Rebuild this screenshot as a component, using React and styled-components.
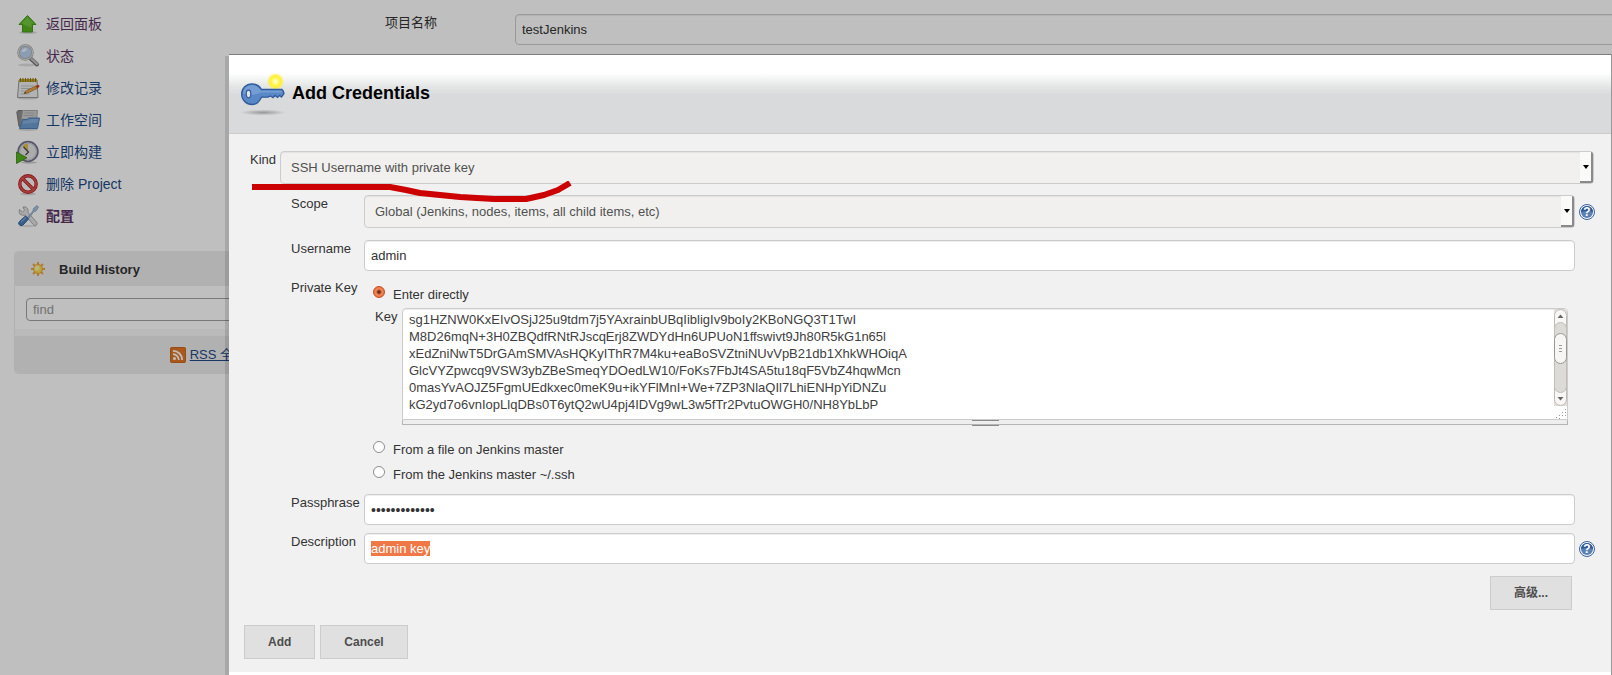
import React, { useEffect, useRef } from 'react'
import styled, { createGlobalStyle, css } from 'styled-components'

const GlobalStyle = createGlobalStyle`
  * { box-sizing: border-box; }
  body {
    margin: 0;
    background: #fff;
    color: #333;
    font: 13px/17px "Liberation Sans", "Noto Sans CJK SC", Arial, sans-serif;
  }
  input, select, textarea, button { font: inherit; color: inherit; margin: 0; }
`

/* ---------- page ---------- */

const Page = styled.div`
  display: flex;
  min-height: 100vh;
  overflow: hidden;
`

const Sidebar = styled.aside`
  flex: 0 0 385px;
  padding: 12px 121px 0 14px;
`

const TaskList = styled.nav`
  display: flex;
  flex-direction: column;
  gap: 8px;
  padding-left: 2px;
  margin-bottom: 23px;
`

const TaskLink = styled.a`
  display: flex;
  align-items: center;
  gap: 6px;
  height: 24px;
  font-size: 14px;
  text-decoration: none;
  color: ${p => (p.$visited ? '#5c3566' : '#204a87')};
  font-weight: ${p => (p.$current ? 'bold' : 'normal')};
`

const HistoryPanel = styled.section`
  border: 1px solid #ededed;
  border-radius: 4px;
  overflow: hidden;
`

const HistoryHeader = styled.h2`
  display: flex;
  align-items: center;
  gap: 13px;
  height: 34px;
  margin: 0;
  padding-left: 15px;
  background: #ededed;
  font-size: 13px;
`

const HistorySearch = styled.div`
  padding: 12px 11px 0;
  height: 43px;
`

const FindInput = styled.input`
  display: block;
  width: 100%;
  height: 23px;
  padding: 0 6px;
  border: 1px solid #a0a0a0;
  border-radius: 4px;
  background: #fff;
  &::placeholder { color: #999; opacity: 1; }
`

const HistoryStrip = styled.div`
  height: 7px;
  background: #f9f9f9;
`

const HistoryFooter = styled.div`
  display: flex;
  align-items: center;
  justify-content: flex-end;
  gap: 4px;
  height: 37px;
  padding-right: 17px;
  background: #ededed;
  a { color: #204a87; }
`

/* runs on past the right edge of the window */
const Main = styled.main`
  flex: 1;
  display: grid;
  grid-template-columns: 130px 1fr;
  align-items: start;
  padding-top: 14px;
  margin-right: -8px;
`

const Label = styled.label`
  white-space: nowrap;
  line-height: 17px;
`

const TextInput = styled.input`
  display: block;
  width: 100%;
  height: 31px;
  padding: 0 6px;
  border: 1px solid #ccc;
  border-radius: 4px;
  outline: none;
  background: #fff;
  box-shadow: inset 0 1px 1px rgba(0, 0, 0, 0.07);
  ${p => p.type === 'password' && css`font-size: 14px;`}
  &::selection { background: #f07746; color: #fff; }
`

const Mask = styled.div`
  position: fixed;
  inset: 0;
  background: rgba(0, 0, 0, 0.25);
`

/* ---------- dialog ---------- */

const Dialog = styled.div`
  position: fixed;
  inset: 54px 0 0 229px;
  border-top: 1px solid #7d7d7d;
  border-right: 1px solid #999;
  background: #fff;
  box-shadow: -4px 2px 0 rgba(0, 0, 0, 0.12);
`

const DialogHeader = styled.header`
  display: flex;
  align-items: center;
  gap: 3px;
  height: 79px;
  padding-left: 12px;
  border-bottom: 1px solid #ccc;
  background: linear-gradient(#fff 18px, #e3e5e5 32px, #d9dadc 40px);
  h1 {
    margin: 0;
    padding-bottom: 2px;
    color: #000;
    font-size: 18px;
    line-height: 22px;
  }
`

const Form = styled.form`
  padding: 17px 0 13px;
  background: #f1f1f1;
`

const KindRow = styled.div`
  position: relative;
  display: grid;
  grid-template-columns: 30px 1fr;
  padding: 0 17px 11px 21px;
`

const Underline = styled.svg`
  position: absolute;
  z-index: 2;
  left: 20px;
  top: 30px;
  pointer-events: none;
`

const Fields = styled.div`
  display: flex;
  flex-direction: column;
  gap: 8px;
  padding-left: 62px;
`

const FieldRow = styled.div`
  display: grid;
  grid-template-columns: 73px 1fr 36px;
  align-items: start;
  margin-bottom: ${p => (p.$spaced ? '4px' : '0')};
`

const Help = styled.a`
  align-self: center;
  display: flex;
  padding-left: 4px;
`

const SelectBox = styled.div`
  position: relative;
  height: 33px;
`

const Select = styled.select`
  appearance: none;
  width: 100%;
  height: 33px;
  padding: 0 10px;
  border: 1px solid #ccc;
  border-radius: 4px;
  background: #f1f0ee;
  color: #505050;
  box-shadow: inset 0 1px 1px rgba(0, 0, 0, 0.06);
`

const SelectArrow = styled.span`
  position: absolute;
  top: 1px;
  right: 1px;
  bottom: 1px;
  width: 13px;
  display: flex;
  align-items: center;
  justify-content: center;
  border: solid #8a8a8a;
  border-width: 0 2px 2px 0;
  border-radius: 0 2px 2px 0;
  background: #fafaf9;
  pointer-events: none;
  &::after {
    content: '';
    border: 3px solid transparent;
    border-top: 4px solid #000;
    border-bottom: 0;
  }
`

const KeySource = styled.div`
  padding: 7px 7px 3px 9px;
`

const RadioLabel = styled.label`
  display: flex;
  align-items: flex-start;
  gap: 8px;
  margin-bottom: ${p => p.$gap || 0}px;
`

const Radio = styled.input`
  appearance: none;
  flex: none;
  width: 12px;
  height: 12px;
  border: 1px solid #8f8d89;
  border-radius: 50%;
  background: #fff;
  &:checked {
    border-color: #c14d22;
    background: radial-gradient(circle, #6b2c14 0 1px, #f4865a 3px, #ee7442 5px);
  }
`

const KeyRow = styled.div`
  display: grid;
  grid-template-columns: 27px 1fr;
  padding-left: 2px;
  margin-bottom: 16px;
`

const KeyBox = styled.div`
  display: flex;
  height: 112px;
  border: 1px solid #ccc;
  border-radius: 4px 4px 0 0;
  background: #fff;
  box-shadow: inset 0 1px 1px rgba(0, 0, 0, 0.08);
`

const KeyText = styled.textarea`
  flex: 1;
  padding: 2px 6px;
  border: 0;
  outline: none;
  resize: none;
  overflow: hidden;
  background: transparent;
  color: #404040;
  line-height: 17px;
  white-space: pre;
`

const ScrollColumn = styled.div`
  display: flex;
  flex-direction: column;
  justify-content: space-between;
  align-items: flex-end;
`

const ResizeBar = styled.div`
  display: flex;
  justify-content: center;
  height: 5px;
  border: 1px solid #b5b5b5;
  border-top: 0;
  background: #eee;
  &::after {
    content: '';
    width: 27px;
    height: 4px;
    border: solid #8a8a8a;
    border-width: 1px 0;
  }
`

const Button = styled.button`
  height: 34px;
  padding: 0 23px;
  border: 1px solid #ccc;
  background: #e0e0e0;
  color: #4d4d4d;
  font-size: 12px;
  font-weight: bold;
`

const AdvancedRow = styled.div`
  display: flex;
  justify-content: flex-end;
  padding: 4px 39px 15px 0;
`

const Actions = styled.div`
  display: flex;
  gap: 5px;
  padding-left: 15px;
`

/* ---------- icons ---------- */

const Icon = ({ children, size = 24 }) => (
  <svg width={size} height={size} viewBox={`0 0 ${size} ${size}`} aria-hidden="true">
    {children}
  </svg>
)

const UpIcon = () => (
  <Icon>
    <ellipse cx="12" cy="20.5" rx="9" ry="1.5" fill="#000" opacity=".15" />
    <path d="M11.5 3.5 20 12.5h-3.5v7.5h-10v-7.5H3z" fill="#55b31c" stroke="#459a1c" />
    <path d="M11.5 5 18 11.6h-2.500v4L7.500 12.500v-1H5z" fill="#8fdc5c" opacity=".5" />
  </Icon>
)

const SearchIcon = () => (
  <Icon>
    <ellipse cx="11" cy="21" rx="9" ry="1.500" fill="#000" opacity=".12" />
    <path d="m14.500 14.500 6.500 6" stroke="#777" strokeWidth="4" strokeLinecap="round" />
    <path d="m15.500 15 5.500 5" stroke="#c9c9c9" strokeWidth="2" strokeLinecap="round" />
    <circle cx="9.500" cy="8.500" r="7" fill="#b9d3ef" stroke="#a5a5a5" strokeWidth="2.500" />
    <circle cx="9.500" cy="8.500" r="7" fill="none" stroke="#ececec" />
    <path d="M5.500 8Q7 3.500 11 4.500 10.500 8 5.500 8z" fill="#fff" opacity=".75" />
  </Icon>
)

const NotepadIcon = () => (
  <Icon>
    <ellipse cx="12" cy="22.500" rx="10" ry="1" fill="#000" opacity=".15" />
    <path d="M3 4h18l1 17.500H1.500z" fill="#eee" stroke="#979797" />
    <path d="M3 3h18v3H3z" fill="#c9a820" />
    <path d="M4.500 2v4m2.500-4v4m2.500-4v4m2.500-4v4m2.500-4v4m2.500-4v4m2.500-4v4" stroke="#86742a" />
    <path d="M5 10h13M5 12.500h9M5 15h5M4.500 18h9" stroke="#c2c2c2" />
    <path d="m8 17.500 2.500-3L20 10l1.300 2.300-9.300 4.500z" fill="#f0a94a" stroke="#9a6a1c" strokeWidth=".7" />
    <path d="m19.500 10 2.500-1.300q2 .3 1.300 2.200l-2 1.400z" fill="#d8391f" />
    <path d="m8 17.500 1.300-1.500.7 1z" fill="#222" />
  </Icon>
)

const FolderIcon = () => (
  <Icon>
    <ellipse cx="12" cy="21.500" rx="10" ry="1.500" fill="#000" opacity=".15" />
    <path d="M.8 4 2 2.500h4l1 2h5v14H3z" fill="#8f8f8f" stroke="#777" />
    <path d="M4.500 18 6.500 2.500h15L20.500 13z" fill="#cdcdcd" stroke="#999" strokeWidth=".8" />
    <path d="M8.500 5h10M8 7.500h10" stroke="#b5b5b5" />
    <path d="M3.500 20.500 6.500 11.500H11l2-1.500h10.500l-2 10.500z" fill="#6d9dd1" stroke="#4f7fb8" />
    <path d="M7.500 12.500h4l2-1.500h9l-.8 3.500-15.200 1.500z" fill="#a1c2e6" opacity=".5" />
  </Icon>
)

const ClockIcon = () => (
  <Icon>
    <ellipse cx="13" cy="22.500" rx="8" ry="1.200" fill="#000" opacity=".2" />
    <circle cx="12" cy="11.500" r="9.800" fill="#e6e6e6" stroke="#73738c" strokeWidth="1.800" />
    <circle cx="12" cy="11.500" r="8.300" fill="none" stroke="#c9c9d8" strokeWidth="1.200" />
    <path d="M12 11.500 6.500 6q2-2.500 5.500-2.500z" fill="#dcc04d" />
    <path d="m7.500 7 5 5-3 3" fill="none" stroke="#444" strokeWidth="1.200" />
    <path d="M.5 12 11 17.800.5 23.500z" fill="#53b51d" stroke="#35800d" strokeWidth=".8" />
  </Icon>
)

const DeleteIcon = () => (
  <Icon>
    <ellipse cx="12" cy="22" rx="8" ry="1.300" fill="#000" opacity=".15" />
    <circle cx="12" cy="12" r="8.200" fill="#f2f2f2" fillOpacity=".5" stroke="#b82020" strokeWidth="3.400" />
    <path d="m6.500 6.500 11 11" stroke="#b82020" strokeWidth="3.400" />
    <circle cx="12" cy="12" r="8.200" fill="none" stroke="#dc5252" strokeWidth="1.800" />
    <path d="m6.500 6.500 11 11" stroke="#dc5252" strokeWidth="1.800" />
  </Icon>
)

const ToolsIcon = () => (
  <Icon>
    <ellipse cx="12" cy="22" rx="9" ry="1.200" fill="#000" opacity=".12" />
    <path
      d="M3.500 5.500 6.500 8l2-1.500L7 3q3-.8 4.500 1.500 1 2 .5 4L20.500 18q1.500 2-.3 3.300-1.700.8-3-.8L9 11q-3 1-5-.8Q2.500 8 3.500 5.500z"
      fill="#e2e2e2" stroke="#999" strokeWidth=".8"
    />
    <path d="m11 14 6-7 .5-2.500L21 1.500 22.500 3l-2.500 4-2 .5-5.500 7z" fill="#a9c3e0" stroke="#7f9cc0" strokeWidth=".8" />
    <path d="M3 20.500Q2 19 3.500 17.500L9.500 12l3 3L7 21q-2 1.500-4-.5z" fill="#4c80bc" stroke="#315f9c" />
    <path d="m5 18 5-4.500" stroke="#9dbfe6" />
  </Icon>
)

const SunIcon = () => (
  <Icon size={16}>
    <path
      d="M8 1v14M1 8h14M3 3l10 10M13 3 3 13"
      stroke="#eda545" strokeWidth="2"
    />
    <circle cx="8" cy="8" r="4.500" fill="#f5dc50" stroke="#e8a040" />
    <circle cx="7" cy="7" r="2.500" fill="#fdf0a0" />
  </Icon>
)

const RssIcon = () => (
  <Icon size={16}>
    <rect width="16" height="16" rx="2" fill="#e07828" />
    <rect x=".5" y=".5" width="15" height="15" rx="2" fill="none" stroke="#d0641a" />
    <circle cx="4.500" cy="11.500" r="1.500" fill="#fff" />
    <path d="M3 7.200a6 6 0 0 1 5.800 5.800M3 3.800a9.200 9.200 0 0 1 9.200 9.200" fill="none" stroke="#fff" strokeWidth="1.800" />
  </Icon>
)

const KeyIcon = () => (
  <Icon size={48}>
    <defs>
      <radialGradient id="glow">
        <stop offset="0" stopColor="#ffffe8" />
        <stop offset=".3" stopColor="#fffb80" />
        <stop offset=".6" stopColor="#fff035" />
        <stop offset=".8" stopColor="#fff035" stopOpacity=".7" />
        <stop offset="1" stopColor="#fff035" stopOpacity="0" />
      </radialGradient>
      <radialGradient id="shade">
        <stop offset="0" stopColor="#000" stopOpacity=".3" />
        <stop offset="1" stopColor="#000" stopOpacity="0" />
      </radialGradient>
    </defs>
    <ellipse cx="22" cy="42.500" rx="23" ry="3" fill="url(#shade)" />
    <circle cx="34.500" cy="11.500" r="8.500" fill="url(#glow)" />
    <path
      d="M11 13.800c4.500 0 7.500 2.500 9.500 5.700H41q2 1.700 2 4l-2.500 3.500-2-1.500-2 2-2.500-2-2 2.200-2.500-1.700-2.500 1.200h-6.500C18.500 31.500 15.500 34.500 11 34.500a10.300 10.300 0 0 1 0-20.700z"
      fill="#5a88c6" stroke="#2f5a9b" strokeWidth="1.300"
    />
    <path d="M11 15c4 0 6.800 2.300 8.600 5.600h20.700l1 2H20Q11 26.500 2 23.500 2.500 15.500 11 15z" fill="#8db3e0" opacity=".5" />
    <ellipse cx="7.500" cy="24" rx="2.300" ry="3.800" fill="#dfe3ea" stroke="#2f5a9b" strokeWidth="1.200" />
  </Icon>
)

const HelpLink = () => (
  <Help href="#help" aria-label="Help">
    <Icon size={16}>
      <circle cx="8" cy="8" r="7.500" fill="#f4f7fc" stroke="#3c619d" />
      <circle cx="8" cy="8" r="6" fill="#5b80b6" />
      <path d="M2 8a6 6 0 0 1 12 0q-6-2-12 0z" fill="#2e5696" />
      <text x="8" y="12" textAnchor="middle" fontSize="12" fontWeight="bold" fill="#fff">?</text>
    </Icon>
  </Help>
)

const Scrollbar = () => (
  <svg width="13" height="97" viewBox="0 0 13 97" aria-hidden="true">
    <rect width="13" height="97" fill="#e2dfdb" />
    <rect x=".5" y=".5" width="12" height="96" rx="6" fill="#f8f7f6" stroke="#beb9b2" />
    <rect x=".5" y="13.500" width="12" height="70" rx="6" fill="#dddbd8" stroke="#c2bdb6" />
    <rect x=".5" y="24.500" width="12" height="30" rx="6" fill="#f7f6f5" stroke="#9a9691" />
    <path d="M5 36.500h3m-3 3h3m-3 3h3" stroke="#999" />
    <path d="M3.500 9h6l-3-3.500zM3.500 88h6l-3 3.500z" fill="#666" />
  </svg>
)

const ResizeGrip = () => (
  <svg width="12" height="12" viewBox="0 0 12 12" aria-hidden="true">
    <path d="M10.500 2v8M7.500 5v6M4.500 8v4M1.500 10v2" stroke="#999" strokeDasharray="1 2" />
  </svg>
)

const tasks = [
  { icon: UpIcon, text: '返回面板', visited: true },
  { icon: SearchIcon, text: '状态', visited: true },
  { icon: NotepadIcon, text: '修改记录' },
  { icon: FolderIcon, text: '工作空间' },
  { icon: ClockIcon, text: '立即构建' },
  { icon: DeleteIcon, text: '删除 Project' },
  { icon: ToolsIcon, text: '配置', visited: true, current: true },
]

const privateKey = `sg1HZNW0KxEIvOSjJ25u9tdm7j5YAxrainbUBqIibligIv9boIy2KBoNGQ3T1TwI
M8D26mqN+3H0ZBQdfRNtRJscqErj8ZWDYdHn6UPUoN1ffswivt9Jh80R5kG1n65l
xEdZniNwT5DrGAmSMVAsHQKyIThR7M4ku+eaBoSVZtniNUvVpB21db1XhkWHOiqA
GlcVYZpwcq9VSW3ybZBeSmeqYDOedLW10/FoKs7FbJt4SA5tu18qF5VbZ4hqwMcn
0masYvAOJZ5FgmUEdkxec0meK9u+ikYFlMnI+We+7ZP3NlaQIl7LhiENHpYiDNZu
kG2yd7o6vnIopLlqDBs0T6ytQ2wU4pj4IDVg9wL3w5fTr2PvtuOWGH0/NH8YbLbP`

function CredentialsDialog() {
  const description = useRef(null)

  useEffect(() => {
    description.current.focus()
    description.current.select()
  }, [])

  return (
    <Dialog role="dialog" aria-labelledby="dialog-title">
      <DialogHeader>
        <KeyIcon />
        <h1 id="dialog-title">Add Credentials</h1>
      </DialogHeader>
      <Form onSubmit={e => e.preventDefault()}>
        <KindRow>
          <Label htmlFor="kind">Kind</Label>
          <SelectBox>
            <Select id="kind">
              <option>SSH Username with private key</option>
            </Select>
            <SelectArrow />
          </SelectBox>
          <Underline width="330" height="24" viewBox="0 0 330 24">
            <path
              d="M3 6h138l16 3 14 3 40 4 34 2h32l18-4 14-5 12-7"
              fill="none" stroke="#c00" strokeWidth="6" strokeLinejoin="round"
            />
          </Underline>
        </KindRow>
        <Fields>
          <FieldRow $spaced>
            <Label htmlFor="scope">Scope</Label>
            <SelectBox>
              <Select id="scope">
                <option>Global (Jenkins, nodes, items, all child items, etc)</option>
              </Select>
              <SelectArrow />
            </SelectBox>
            <HelpLink />
          </FieldRow>
          <FieldRow>
            <Label htmlFor="username">Username</Label>
            <TextInput id="username" defaultValue="admin" />
          </FieldRow>
          <FieldRow role="radiogroup" aria-labelledby="source">
            <Label as="span" id="source">Private Key</Label>
            <KeySource>
              <RadioLabel $gap={5}>
                <Radio type="radio" name="source" defaultChecked />
                Enter directly
              </RadioLabel>
              <KeyRow>
                <Label htmlFor="key">Key</Label>
                <div>
                  <KeyBox>
                    <KeyText id="key" spellCheck={false} defaultValue={privateKey} />
                    <ScrollColumn>
                      <Scrollbar />
                      <ResizeGrip />
                    </ScrollColumn>
                  </KeyBox>
                  <ResizeBar />
                </div>
              </KeyRow>
              <RadioLabel $gap={8}>
                <Radio type="radio" name="source" />
                From a file on Jenkins master
              </RadioLabel>
              <RadioLabel>
                <Radio type="radio" name="source" />
                From the Jenkins master ~/.ssh
              </RadioLabel>
            </KeySource>
          </FieldRow>
          <FieldRow>
            <Label htmlFor="passphrase">Passphrase</Label>
            <TextInput id="passphrase" type="password" defaultValue="passphrase123" />
          </FieldRow>
          <FieldRow>
            <Label htmlFor="description">Description</Label>
            <TextInput id="description" ref={description} defaultValue="admin key" />
            <HelpLink />
          </FieldRow>
          <AdvancedRow>
            <Button type="button">高级...</Button>
          </AdvancedRow>
        </Fields>
        <Actions>
          <Button type="submit">Add</Button>
          <Button type="button">Cancel</Button>
        </Actions>
      </Form>
    </Dialog>
  )
}

export default function App() {
  return (
    <>
      <GlobalStyle />
      <Page>
        <Sidebar>
          <TaskList>
            {tasks.map(({ icon: TaskIcon, text, visited, current }) => (
              <TaskLink key={text} href="#task" $visited={visited} $current={current}>
                <TaskIcon />
                {text}
              </TaskLink>
            ))}
          </TaskList>
          <HistoryPanel>
            <HistoryHeader>
              <SunIcon />
              Build History
            </HistoryHeader>
            <HistorySearch>
              <FindInput placeholder="find" aria-label="find" />
            </HistorySearch>
            <HistoryStrip />
            <HistoryFooter>
              <RssIcon />
              <a href="#rss">RSS 全部</a>
            </HistoryFooter>
          </HistoryPanel>
        </Sidebar>
        <Main>
          <Label htmlFor="project">项目名称</Label>
          <TextInput id="project" defaultValue="testJenkins" />
        </Main>
      </Page>
      <Mask />
      <CredentialsDialog />
    </>
  )
}
